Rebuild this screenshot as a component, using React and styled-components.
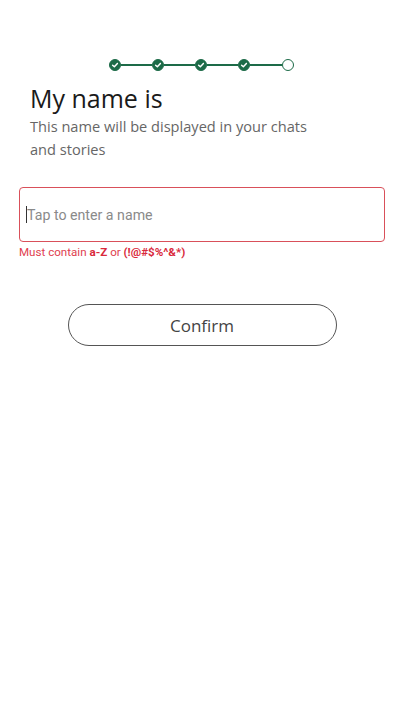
import React from 'react';
import styled, { createGlobalStyle } from 'styled-components';

const GREEN = '#1d6b48';

const GlobalStyle = createGlobalStyle`
  body {
    margin: 0;
    background: #ffffff;
    font-family: 'Open Sans', 'Liberation Sans', sans-serif;
  }
`;

const steps = [true, true, true, true, false];

const CheckIcon = () => (
  <svg width="8" height="8" viewBox="0 0 10 10">
    <path d="M2 5.2 L4.2 7.3 L8 3" fill="none" stroke="#fff" strokeWidth="1.8" strokeLinecap="round" strokeLinejoin="round" />
  </svg>
);

const App = () => {
  return (
    <Page>
      <GlobalStyle />
      <Stepper>
        {steps.map((done, i) => (
          <React.Fragment key={i}>
            {i > 0 && <Line />}
            <Dot done={done}>{done && <CheckIcon />}</Dot>
          </React.Fragment>
        ))}
      </Stepper>
      <Heading>
        <Title>My name is</Title>
        <Subtitle>This name will be displayed in your chats and stories</Subtitle>
      </Heading>
      <Field>
        <Caret />
        <Placeholder>Tap to enter a name</Placeholder>
      </Field>
      <ErrorText>
        Must contain <b>a-Z</b> or <b>(!@#$%^&amp;*)</b>
      </ErrorText>
      <ButtonRow>
        <ConfirmButton>Confirm</ConfirmButton>
      </ButtonRow>
    </Page>
  );
};

const Page = styled.div`
  width: 404px;
  min-height: 720px;
  box-sizing: border-box;
  padding: 59px 19px 0;
  display: flex;
  flex-direction: column;
`;

const Stepper = styled.div`
  display: flex;
  align-items: center;
  align-self: center;
  width: 185px;
  margin-left: -2px;
`;

const Line = styled.div`
  flex: 1;
  height: 2px;
  background: ${GREEN};
`;

const Dot = styled.div`
  width: 12px;
  height: 12px;
  box-sizing: border-box;
  border-radius: 50%;
  border: 1.5px solid ${GREEN};
  background: ${p => (p.done ? GREEN : '#fff')};
  display: flex;
  align-items: center;
  justify-content: center;
`;

const Heading = styled.div`
  padding-left: 11px;
  margin-top: 10px;
`;

const Title = styled.h1`
  margin: 0;
  font-size: 25px;
  font-weight: 400;
  line-height: 34px;
  color: #1a1a1a;
`;

const Subtitle = styled.p`
  margin: 0;
  width: 300px;
  font-size: 14.6px;
  line-height: 23px;
  color: #666;
`;

const Field = styled.div`
  margin-top: 26px;
  height: 55px;
  box-sizing: border-box;
  border: 1px solid #d9505a;
  border-radius: 4px;
  display: flex;
  align-items: center;
  padding-left: 6px;
`;

const Caret = styled.span`
  width: 1px;
  height: 17px;
  background: #333;
`;

const Placeholder = styled.span`
  font-family: Roboto, 'Liberation Sans', sans-serif;
  font-size: 14.2px;
  color: #8a8a8a;
`;

const ErrorText = styled.div`
  margin-top: 3px;
  font-family: Roboto, 'Liberation Sans', sans-serif;
  font-size: 11.6px;
  color: #e0404f;
  b {
    font-weight: 700;
    color: #d92a3c;
  }
`;

const ButtonRow = styled.div`
  display: flex;
  justify-content: center;
  margin-top: 45px;
`;

const ConfirmButton = styled.button`
  width: 269px;
  height: 42px;
  border: 1.5px solid #555;
  border-radius: 21px;
  background: #fff;
  font-family: 'Open Sans', 'Liberation Sans', sans-serif;
  font-size: 17px;
  color: #444;
  cursor: pointer;
`;

export default App;
